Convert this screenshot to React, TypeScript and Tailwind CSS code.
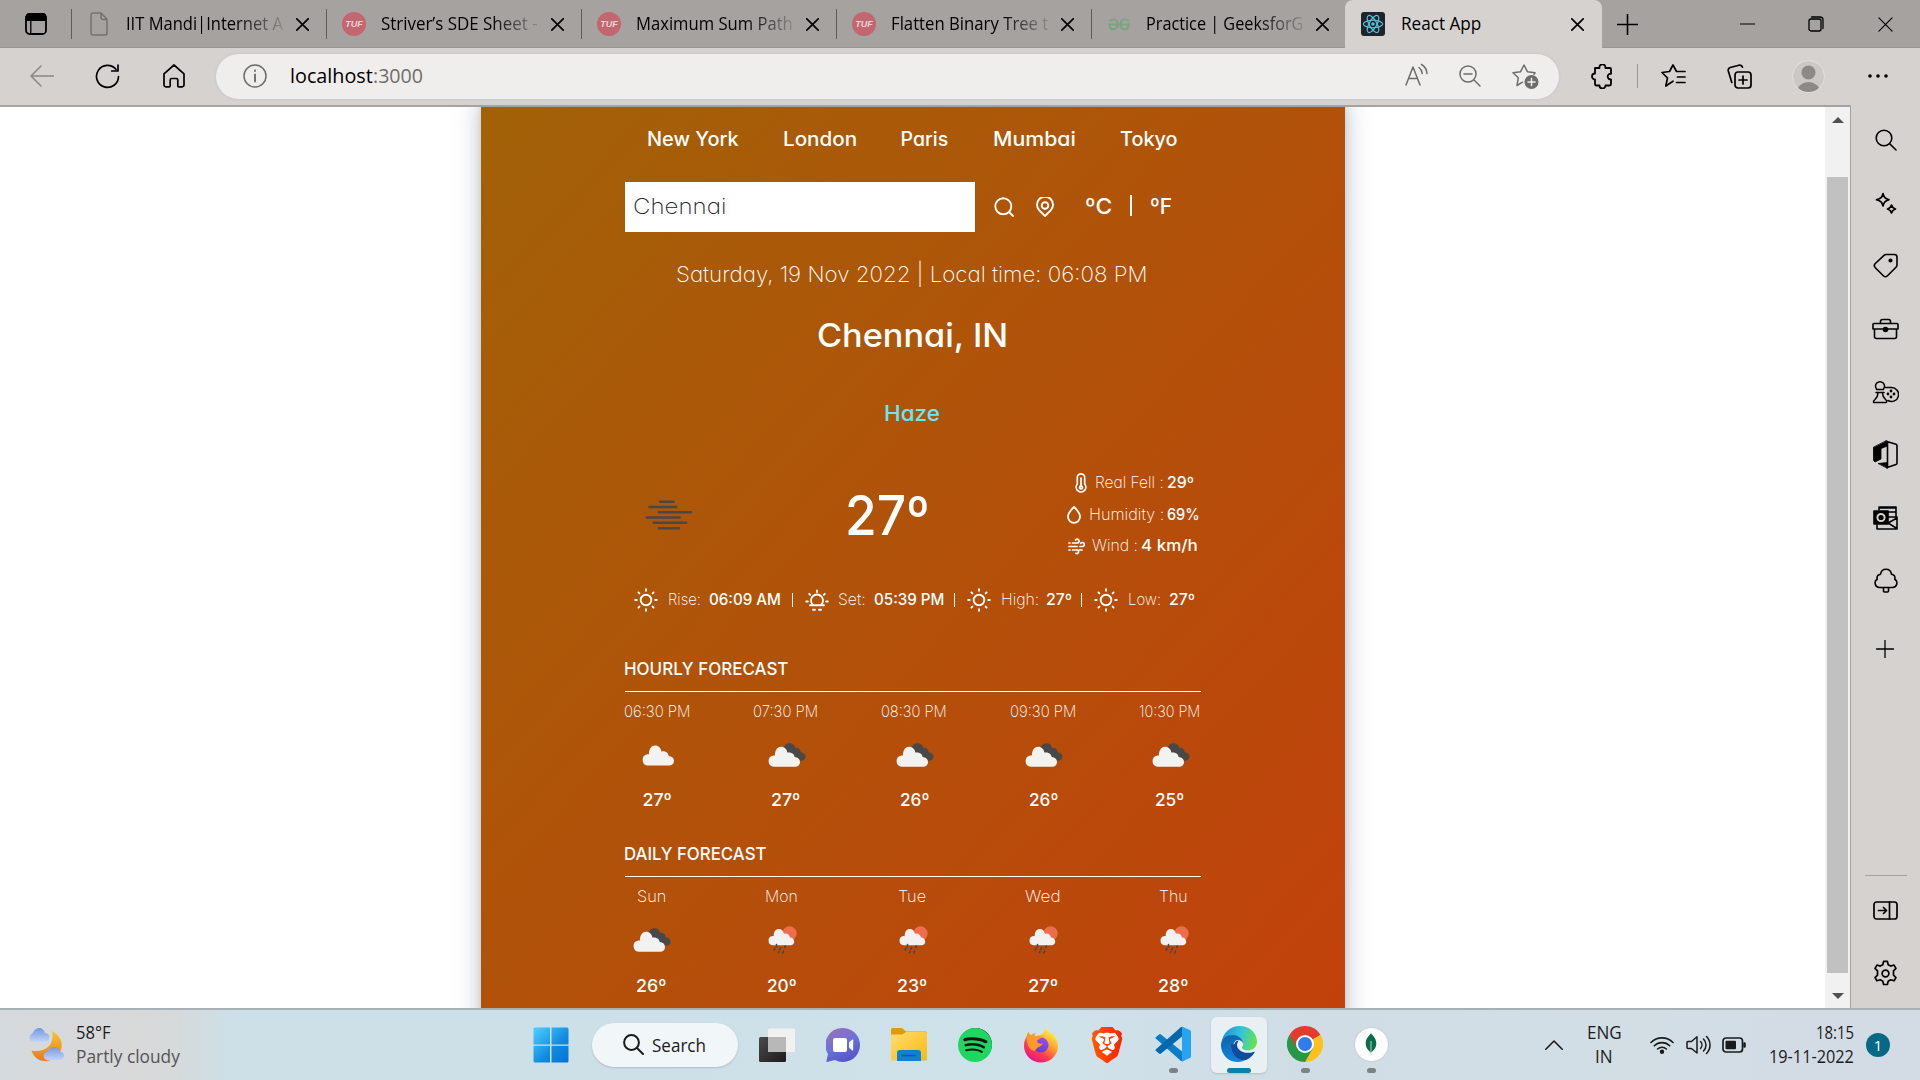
import React, { useLayoutEffect, useRef, useState } from "react";
import { SiBrave, SiSpotify } from "react-icons/si";

/* Text that is stretched horizontally so that it fills exactly `w` pixels. */
function Fit({ w, className = "", children }: { w: number; className?: string; children: React.ReactNode }) {
  const ref = useRef<HTMLSpanElement>(null);
  const [scale, setScale] = useState(1);
  useLayoutEffect(() => {
    if (ref.current) setScale(w / ref.current.offsetWidth);
  }, [w]);
  return (
    <span className={`block shrink-0 whitespace-pre ${className}`} style={{ width: w }}>
      <span ref={ref} className="inline-block origin-left" style={{ transform: `translateX(-1px) scaleX(${scale})` }}>
        {children}
      </span>
    </span>
  );
}

type IconProps = { w: number; h?: number; vb?: string; className?: string; sw?: number; children: React.ReactNode };
function Icon({ w, h = w, vb = "0 0 24 24", className = "", sw = 1.4, children }: IconProps) {
  return (
    <svg
      width={w}
      height={h}
      viewBox={vb}
      className={`block shrink-0 ${className}`}
      fill="none"
      stroke="currentColor"
      strokeWidth={sw}
      strokeLinecap="round"
      strokeLinejoin="round"
    >
      {children}
    </svg>
  );
}

const Cross = ({ size = 13, sw = 1.7 }: { size?: number; sw?: number }) => (
  <Icon w={size} vb="0 0 13 13" sw={sw}>
    <path d="M.8.8l11.4 11.4M12.2.8L.8 12.2" />
  </Icon>
);

/* ---------- Tab strip ---------- */

const TufIcon = () => (
  <span className="flex h-6 w-6 items-center justify-center rounded-full bg-[#c4666f] font-['Liberation_Sans'] text-[9px] font-bold italic text-[#ecd3d5]">
    TUF
  </span>
);
const DocIcon = () => (
  <Icon w={18} h={24} vb="0 0 18 24" className="text-[#75716f]" sw={1.5}>
    <path d="M3 1h8l6 6.3V21a2 2 0 0 1-2 2H3a2 2 0 0 1-2-2V3a2 2 0 0 1 2-2zM11 1v4.5a2 2 0 0 0 2 2h4" />
  </Icon>
);
const GfgIcon = () => (
  <Icon w={22} h={13} vb="0 0 22 13" className="text-[#7ba37f]" sw={1.9}>
    <path d="M1 6.5h20M2 2.6C5 0 9.600 1.600 9.600 6.200c0 6-7 6.800-8 2M20 2.600C17 0 12.400 1.600 12.400 6.200c0 6 7 6.800 8 2" />
  </Icon>
);

const tabs = [
  { title: "IIT Mandi|Internet A", icon: <DocIcon />, box: "w-[18px] ml-[18px] mr-[18px]" },
  { title: "Striver’s SDE Sheet -", icon: <TufIcon />, box: "w-6 ml-[15px] mr-[15px]" },
  { title: "Maximum Sum Path", icon: <TufIcon />, box: "w-6 ml-[15px] mr-[15px]" },
  { title: "Flatten Binary Tree t", icon: <TufIcon />, box: "w-6 ml-[15px] mr-[15px]" },
  { title: "Practice | GeeksforG", icon: <GfgIcon />, box: "w-[22px] ml-4 mr-4" },
];

function TabStrip() {
  return (
    <div className="flex h-12 items-center bg-[#a6a2a0] text-[18px] leading-6 shadow-[inset_0_-2px_1px_-1px_#9a9694]">
      <Icon w={22} h={22} vb="0 0 22 22" className="ml-[25px] mr-6" sw={1.8}>
        <rect x="1" y="1" width="20" height="20" rx="3.500" />
        <path d="M1.500 7V4a3 3 0 0 1 3-3h13a3 3 0 0 1 3 3v3z" fill="currentColor" />
        <path d="M5.800 8v13" strokeWidth="1.300" />
      </Icon>
      {tabs.map((t, i) => (
        <div key={i} className="flex w-[255px] items-center">
          <span className="h-[30px] w-px bg-[#5f5c5a]" />
          <span className={`shrink-0 ${t.box}`}>{t.icon}</span>
          <Fit w={157} className="-mt-0.5 overflow-hidden pl-px [mask-image:linear-gradient(to_right,#000_70%,#0002)]">
            {t.title}
          </Fit>
          <span className="ml-[13px]">
            <Cross />
          </span>
        </div>
      ))}
      <div className="-ml-px flex h-12 w-[257px] items-center rounded-t-lg bg-[#d6d2d0]">
        <span className="ml-4 flex h-6 w-6 items-center justify-center rounded-[3px] bg-[#20232a] text-[#53c1de]">
          <Icon w={22} sw={1.300}>
            <circle cx="12" cy="12" r="1.900" fill="currentColor" stroke="none" />
            <ellipse cx="12" cy="12" rx="10.500" ry="4.100" />
            <ellipse cx="12" cy="12" rx="10.500" ry="4.100" transform="rotate(60 12 12)" />
            <ellipse cx="12" cy="12" rx="10.500" ry="4.100" transform="rotate(120 12 12)" />
          </Icon>
        </span>
        <Fit w={80} className="-mt-0.5 ml-[17px] mr-[89px]">React App</Fit>
        <Cross />
      </div>
      <Icon w={21} vb="0 0 21 21" className="ml-[15px]" sw={1.600}>
        <path d="M10.500 .5v20M.5 10.500h20" />
      </Icon>
      <Icon w={15} h={14} vb="0 0 15 14" className="ml-[102px]" sw={1.200}>
        <path d="M.5 7h14" />
      </Icon>
      <Icon w={16} h={16} vb="0 0 16 16" className="ml-[53px]" sw={1.300}>
        <rect x="1" y="3" width="12" height="12" rx="2" />
        <path d="M3.500 1h8.500a3 3 0 0 1 3 3v8.500" />
      </Icon>
      <span className="ml-[54px]">
        <Cross size={15} sw={1} />
      </span>
    </div>
  );
}

/* ---------- Toolbar ---------- */

function Toolbar() {
  return (
    <div className="flex h-[57px] items-center bg-[#d6d2d0] pb-px">
      <Icon w={24} h={22} vb="0 0 24 22" className="ml-[30px] text-[#8a8785]" sw={1.500}>
        <path d="M23.500 11H1M11 1L1 11l10 10" />
      </Icon>
      <Icon w={25} h={25} vb="0 0 25 25" className="ml-[41px]" sw={1.700}>
        <path d="M23.500 12.500a11 11 0 1 1-2.600-7.200M23 1v6h-6.300" />
      </Icon>
      <Icon w={22} h={24} vb="0 0 22 24" className="ml-[43px]" sw={1.700}>
        <path d="M1 9.800L11 1l10 8.800V21a1.800 1.800 0 0 1-1.800 1.800h-3.400a1 1 0 0 1-1-1V16a1.500 1.500 0 0 0-1.500-1.500H8.700A1.500 1.500 0 0 0 7.200 16v5.800a1 1 0 0 1-1 1H2.800A1.800 1.800 0 0 1 1 21z" />
      </Icon>
      <div className="ml-[31px] flex h-[45px] w-[1343px] items-center rounded-full bg-[#efeeec] shadow-[0_0_3px_#c2bebc] text-[#6f6d6b]">
        <Icon w={24} className="ml-[27px]" sw={1.500}>
          <circle cx="12" cy="12" r="11" />
          <path d="M12 10.500v7M12 6.500v.600" strokeWidth="1.900" />
        </Icon>
        <div className="ml-6 flex text-[20px] leading-7">
          <Fit w={83} className="text-black">localhost</Fit>
          <Fit w={50}>:3000</Fit>
        </div>
        <Icon w={23} h={24} vb="0 0 23 24" className="-mt-0.5 ml-auto" sw={1.500}>
          <path d="M1 22L8 4l7 18M3.500 15.500h9M14 4.500c2 1.500 3 3.500 3.200 6M16.500 1.500c3.400 2 5.200 5 5.500 9" />
        </Icon>
        <Icon w={22} vb="0 0 22 22" className="ml-[31px]" sw={1.500}>
          <circle cx="9" cy="9" r="8" />
          <path d="M14.800 14.800l6.200 6.200M5 9h8" />
        </Icon>
        <Icon w={27} h={26} vb="0 0 27 26" className="ml-[31px] mr-5 mt-0.5" sw={1.500}>
          <path d="M10.500 18.200L5 21.500l1.300-7.800L1 8.800l7.600-1.100L12 1l3.400 6.700 7.600 1.100-1 1.500" />
          <circle cx="19.500" cy="18" r="7" fill="currentColor" stroke="none" />
          <path d="M19.500 14.500v7M16 18h7" stroke="#efeeec" />
        </Icon>
      </div>
      <Icon w={22} h={25} vb="0 0 22 25" className="ml-[31px]" sw={1.800}>
        <path d="M5 4h4.500a3 3 0 1 1 5.800 0H20a1 1 0 0 1 1 1v4.800a2.800 2.800 0 1 0 0 5.500V20a1.500 1.500 0 0 1-1.500 1.500h-4a3 3 0 0 1-6 0H6.500A1.500 1.500 0 0 1 5 20v-4.500a3 3 0 1 1 0-6z" />
      </Icon>
      <span className="ml-[25px] h-6 w-px bg-[#9c9896]" />
      <Icon w={25} h={24} vb="0 0 25 24" className="ml-[23px]" sw={1.700}>
        <path d="M12 17.200L4.800 22 6.500 14 1 8.500l7.500-1L12 1l3.500 6.500H24M16.500 13H24M15.500 18.500H24" />
      </Icon>
      <Icon w={25} h={25} vb="0 0 25 25" className="ml-[41px]" sw={1.700}>
        <rect x="8" y="8" width="16" height="16" rx="3" />
        <path d="M16 12v8M12 16h8M4.800 18.500L1.300 7A3 3 0 0 1 3.200 3.500L12 1.200a3 3 0 0 1 3.500 2" />
      </Icon>
      <span className="ml-10 flex h-[33px] w-[33px] shrink-0 items-center justify-center overflow-hidden rounded-full border border-[#e4e2e0] bg-[#cbc8c5]">
        <svg width="31" height="31" viewBox="0 0 31 31" fill="#8d8986">
          <circle cx="15.500" cy="11.500" r="7" />
          <path d="M4 31a11.500 10 0 0 1 23 0z" />
        </svg>
      </span>
      <Icon w={20} h={4} vb="0 0 20 4" className="ml-[43px]">
        <g fill="currentColor" stroke="none">
          <circle cx="2" cy="2" r="1.800" />
          <circle cx="10" cy="2" r="1.800" />
          <circle cx="18" cy="2" r="1.800" />
        </g>
      </Icon>
    </div>
  );
}

/* ---------- Weather app ---------- */

const Sun = () => (
  <Icon w={24} sw={1.900}>
    <circle cx="12" cy="12" r="5.300" />
    <path d="M12 1.200v1.600M12 21.200v1.600M1.200 12h1.600M21.200 12h1.600M4.400 4.400l1 1M18.600 18.600l1 1M4.400 19.600l1-1M18.600 5.400l1-1" />
  </Icon>
);
const Sunset = () => (
  <Icon w={24} sw={1.900}>
    <path d="M5 17.300h14M8 17a6 6 0 1 1 8 0M8 21.800h2M14 21.800h2M12 2.500v1.600M1.200 13.500h1.600M21.200 13.500h1.600M4.200 5.800l1 1M18.800 6.800l1-1" />
  </Icon>
);

const cloudPath = "M5.700 20.500a5.700 5.700 0 0 1-.300-11.300c.600 0 1.100 0 1.500.100C6.900 3.500 9.600.5 13.200.5c3.300 0 5.700 2.500 6.200 5.900 3.900-1 7.200 1.500 7.300 4.500 3.200.200 5.300 2 5.300 4.900 0 3-2 4.700-4.800 4.700z";
const Cloud = () => (
  <svg width="32" height="21" viewBox="0 0 32 21">
    <path d={cloudPath} fill="#f2f2f0" />
  </svg>
);
const Overcast = () => (
  <svg width="38" height="24" viewBox="0 0 38 24">
    <path d="M14.500 9C15 3.500 18 .3 21.500.3c3 0 5 1.700 5.600 4.400 3.500-.300 5.500 1.600 5.600 4.500 3 .300 4.800 2 4.800 4.300 0 2.600-2 4.200-4.500 4.200l-9-2z" fill="#484848" />
    <path d={cloudPath} transform="translate(0 3.200)" fill="#f2f2f0" />
  </svg>
);
const SunRain = () => (
  <svg width="29" height="28" viewBox="0 0 29 28">
    <circle cx="21.500" cy="7.500" r="7.200" fill="#ec6e4c" />
    <path d={cloudPath} transform="translate(0 2.500) scale(.82 .82)" fill="#f2f2f2" />
    <path d="M8.500 18.500v2M7 22l-.700 2M12.500 21.500l-.700 2M17.200 20l-.500 1.500M11 25.500l-.400 1M15.500 25l-.700 2" stroke="#484848" strokeWidth="1.600" strokeLinecap="round" fill="none" />
  </svg>
);

const cities: [string, number][] = [["New York", 92], ["London", 74], ["Paris", 48], ["Mumbai", 83], ["Tokyo", 58]];
const hourly: [string, number, React.ReactNode, string][] = [
  ["06:30 PM", 66, <Cloud />, "27º"],
  ["07:30 PM", 65, <Overcast />, "27º"],
  ["08:30 PM", 66, <Overcast />, "26º"],
  ["09:30 PM", 66, <Overcast />, "26º"],
  ["10:30 PM", 61, <Overcast />, "25º"],
];
const daily: [string, number, React.ReactNode, string][] = [
  ["Sun", 29, <Overcast />, "26º"],
  ["Mon", 33, <SunRain />, "20º"],
  ["Tue", 28, <SunRain />, "23º"],
  ["Wed", 36, <SunRain />, "27º"],
  ["Thu", 28, <SunRain />, "28º"],
];

function WeatherCard() {
  return (
    <div className="-mt-[34px] h-[949px] w-[864px] shrink-0 bg-[linear-gradient(to_bottom_right,#a16207,#c2410c)] px-36 pt-[34px] font-['Inter'] font-[450] text-white shadow-[0_22px_28px_-5px_#9ca3af,0_9px_11px_-6px_#9ca3af] [font-feature-settings:'cv11']">
      <nav className="flex h-16 items-center justify-center gap-[44px] pt-px text-[19.500px]">
        {cities.map(([c, w]) => <Fit key={c} w={w}>{c}</Fit>)}
      </nav>

      <div className="mt-[11px] flex h-[50px] items-center">
        <div className="flex h-[50px] w-[350px] items-center bg-white pl-[9px] text-[22px] font-extralight text-[#1f2530]">
          <Fit w={93} className="-mt-px">Chennai</Fit>
        </div>
        <Icon w={20} vb="0 0 20 20" className="ml-[19px]" sw={1.900}>
          <circle cx="9.300" cy="9.300" r="8" />
          <path d="M15.200 15.200L19 19" />
        </Icon>
        <Icon w={18} h={20} vb="0 0 18 20" className="ml-[22px] mr-8" sw={1.900}>
          <path d="M9 19L3.300 13.300a8 8 0 1 1 11.400 0z" />
          <circle cx="9" cy="8.500" r="3.300" />
        </Icon>
        <Fit w={27} className="-mt-px text-[22px]">ºC</Fit>
        <span className="ml-[17px] mr-[19px] -mt-1 h-[21px] w-[2px] bg-white" />
        <Fit w={22} className="-mt-px text-[22px]">ºF</Fit>
      </div>

      <div className="mt-7 flex h-7 items-center justify-center text-[22px] font-extralight">
        <Fit w={472}>Saturday, 19 Nov 2022 | Local time: 06:08 PM</Fit>
      </div>
      <div className="mt-7 flex h-10 items-center justify-center text-[33px]">
        <Fit w={191}>Chennai, IN</Fit>
      </div>
      <div className="mt-[43px] flex h-7 items-center justify-center text-[22px] text-[#67e8f9]">
        <Fit w={56}>Haze</Fit>
      </div>

      <div className="mt-10 flex h-[95px] items-center">
        <svg width="50" height="32" viewBox="0 0 50 32" className="ml-5 mt-px" stroke="#484848" strokeWidth="2.600" strokeLinecap="round">
          <path d="M15.700 2.200h14M4.600 7.700h28M14.500 13.200H48M2 18.700h34M9 24.200h34M14.500 29.700h21" />
        </svg>
        <Fit w={85} className="ml-[153px] mr-[136px] text-[54.500px] leading-[54px]">27º</Fit>
        <div className="flex flex-col text-[15.800px] font-extralight">
          <div className="flex h-[31.500px] items-center pl-2">
            <Icon w={12} h={20} vb="0 0 12 20" sw={1.700}>
              <path d="M2.300 11V4.500a3.700 3.700 0 0 1 7.400 0V11a4.800 4.800 0 1 1-7.400 0zM6 5v9" />
              <circle cx="6" cy="14.500" r="1.500" />
            </Icon>
            <Fit w={69} className="ml-[9px]">Real Fell :</Fit>
            <Fit w={27} className="ml-[3px] font-[450]">29º</Fit>
          </div>
          <div className="flex h-[31.500px] items-center">
            <Icon w={14} h={18} vb="0 0 14 18" sw={1.800}>
              <path d="M7 1c-3 2.800-6 6-6 9.800a6 6 0 0 0 12 0C13 7 10 3.800 7 1z" />
            </Icon>
            <Fit w={75} className="ml-[9px]">Humidity :</Fit>
            <Fit w={33} className="ml-[3px] font-[450]">69%</Fit>
          </div>
          <div className="flex h-[31.500px] items-center pl-px">
            <Icon w={17} h={17} vb="0 0 17 17" sw={1.700}>
              <path d="M1 5h1M4.500 5h4.800a1.900 1.900 0 1 0-1.700-3M1 8.500h8M12 8.500h2.200a2 2 0 1 0-1.500-3.200M1 12h1M4.500 12h3.800a1.800 1.800 0 1 1-.500 3.300M11 12h3" />
            </Icon>
            <Fit w={46} className="ml-[8px]">Wind :</Fit>
            <Fit w={57} className="ml-[3px] font-[450]">4 km/h</Fit>
          </div>
        </div>
      </div>

      <div className="mt-[26px] flex h-6 items-center pl-[9px] text-[15.800px] font-extralight">
        <Sun />
        <Fit w={33} className="ml-[11px] mr-2">Rise:</Fit>
        <Fit w={72} className="font-[450]">06:09 AM</Fit>
        <span className="ml-[10px] mr-3 h-[14px] w-px bg-white" />
        <Sunset />
        <Fit w={28} className="ml-[10px] mr-2">Set:</Fit>
        <Fit w={70} className="font-[450]">05:39 PM</Fit>
        <span className="ml-[9px] mr-3 h-[14px] w-px bg-white" />
        <Sun />
        <Fit w={38} className="ml-[11px] mr-[7px]">High:</Fit>
        <Fit w={26} className="font-[450]">27º</Fit>
        <span className="ml-[8px] mr-3 h-[14px] w-px bg-white" />
        <Sun />
        <Fit w={33} className="ml-[11px] mr-2">Low:</Fit>
        <Fit w={26} className="font-[450]">27º</Fit>
      </div>

      <div className="mt-[43px] flex h-7 items-center text-[17.800px]">
        <Fit w={164}>HOURLY FORECAST</Fit>
      </div>
      <hr className="mt-2 border-t border-white" />
      <div className="mt-[9px] flex justify-between">
        {hourly.map(([t, w, icon, deg]) => (
          <div key={t} className="flex flex-col items-center">
            <div className="flex h-[22px] items-center text-[15.800px] font-extralight"><Fit w={w}>{t}</Fit></div>
            <div className="mt-1 flex h-14 items-center justify-center">{icon}</div>
            <div className="mt-[5px] flex h-6 items-center text-[17.800px]"><Fit w={29}>{deg}</Fit></div>
          </div>
        ))}
      </div>

      <div className="mt-7 flex h-7 items-center text-[17.800px]">
        <Fit w={143}>DAILY FORECAST</Fit>
      </div>
      <hr className="mt-2 border-t border-white" />
      <div className="mt-[9px] flex justify-between">
        {daily.map(([t, w, icon, deg]) => (
          <div key={t} className="flex w-[54px] flex-col items-center">
            <div className="flex h-[22px] items-center text-[15.800px] font-extralight"><Fit w={w}>{t}</Fit></div>
            <div className="mt-1 flex h-14 items-center justify-center">{icon}</div>
            <div className="mt-[6px] flex h-6 items-center text-[17.800px]"><Fit w={30}>{deg}</Fit></div>
          </div>
        ))}
      </div>
    </div>
  );
}

function Scrollbar() {
  return (
    <div className="flex w-[25px] flex-col items-center bg-[#f1f1f1] pt-[10px]">
      <svg width="12" height="6" viewBox="0 0 12 6" fill="#505050"><path d="M0 6L6 0l6 6z" /></svg>
      <div className="mt-[54px] h-[796px] w-[21px] bg-[#c1c1c1]" />
      <svg width="12" height="6" viewBox="0 0 12 6" fill="#505050" className="mt-5"><path d="M0 0l6 6 6-6z" /></svg>
    </div>
  );
}

/* ---------- Edge sidebar ---------- */

const sideIcons = [
  <Icon w={22} vb="0 0 22 22" sw={1.600}><circle cx="9" cy="9" r="7.800" /><path d="M14.700 14.700L21 21" /></Icon>,
  <Icon w={22} vb="0 0 22 22" sw={1.700}>
    <path d="M8 1.500c1 4 2 5 6 6.300-4 1.200-5 2.200-6 6.200-1-4-2-5-6.500-6.200C6 6.500 7 5.500 8 1.500zM16.500 13c.600 2.300 1.500 3.200 4 4-2.500.700-3.400 1.500-4 4-.600-2.500-1.500-3.300-4-4 2.500-.800 3.400-1.700 4-4z" />
  </Icon>,
  <Icon w={25} h={25} vb="0 0 25 25" sw={1.600}>
    <path d="M13 1.500h8.500A2.500 2.500 0 0 1 24 4v8a3 3 0 0 1-1 2.200l-8.500 8.500a3 3 0 0 1-4.200 0l-8-8a3 3 0 0 1 0-4.200L11 2.400a3 3 0 0 1 2-.9z" />
    <circle cx="17.500" cy="7.500" r="1.300" fill="currentColor" />
  </Icon>,
  <Icon w={27} h={22} vb="0 0 27 22" sw={1.600}>
    <path d="M2 5.500h23a1 1 0 0 1 1 1V11H1V6.500a1 1 0 0 1 1-1zM2.500 11v7.500a2 2 0 0 0 2 2h18a2 2 0 0 0 2-2V11M8.500 5.500v-2a2 2 0 0 1 2-2h6a2 2 0 0 1 2 2v2" />
    <circle cx="13.500" cy="11.500" r="2" fill="currentColor" />
  </Icon>,
  <Icon w={27} h={24} vb="0 0 27 24" sw={1.500}>
    <path d="M5 9.500a4.500 4.500 0 1 1 6 0M4.500 9.500h7M4 12.500h8M6 13c0 3-1 4.500-3 6.500-1.500 1-2 3-1 3h12c1 0 1-2-.500-3-1.500-1.500-3-3.500-3-6.500M13 7.500h6a7 7 0 1 1-3 13" />
    <g fill="currentColor" stroke="none">
      <circle cx="19" cy="11" r="1.400" /><circle cx="19" cy="17" r="1.400" /><circle cx="16" cy="14" r="1.400" /><circle cx="22" cy="14" r="1.400" />
    </g>
  </Icon>,
  <Icon w={25} h={29} vb="0 0 25 29" sw={1.600}>
    <path d="M13 1.200l10 3a1.500 1.500 0 0 1 1 1.300v17.800a1.500 1.500 0 0 1-1 1.300l-9 3M14.500 1.500v26" />
    <path d="M13.500 1L14.500 6 8 8.500V19l-6 3-1.500-1.500V7.500zM5.500 23.500l9-1V28z" fill="currentColor" strokeWidth=".8" />
  </Icon>,
  <Icon w={25} h={24} vb="0 0 25 24" sw={1.600}>
    <rect x="1" y="5" width="14" height="13" fill="currentColor" />
    <circle cx="8" cy="11.500" r="3.600" stroke="#d6d2d0" strokeWidth="2" />
    <path d="M6 4V1h17v10M6 2h17M15 6h8M15 11h9v12H4v-4M24 12l-9 5 9 5.500" />
  </Icon>,
  <Icon w={24} h={25} vb="0 0 24 25" sw={1.600}>
    <path d="M5.500 19.500a4.500 4.500 0 0 1-2.300-8.300C2.500 8 4.500 6.500 6.500 6.200 7 3 9.500 1.200 12 1.200s5 1.800 5.500 5c2 .3 4 1.800 3.300 5a4.500 4.500 0 0 1-2.300 8.300zM9.500 19.500h5V23a1 1 0 0 1-1 1h-3a1 1 0 0 1-1-1z" />
  </Icon>,
];

function Sidebar() {
  return (
    <div className="flex w-[69px] flex-col items-center bg-[#d6d2d0] pt-[3px] text-black">
      {sideIcons.map((ic, i) => (
        <div key={i} className="flex h-[63px] w-[69px] items-center justify-center">{ic}</div>
      ))}
      <Icon w={18} vb="0 0 18 18" className="mt-7 mr-0.5" sw={1.300}><path d="M9 .5v17M.5 9h17" /></Icon>
      <div className="mt-[217px] h-px w-[42px] bg-[#a6a2a0]" />
      <Icon w={25} h={19} vb="0 0 25 19" className="mt-[25px]" sw={1.700}>
        <rect x="1" y="1" width="23" height="17" rx="2.500" />
        <path d="M16.500 1v17M5.500 9.500h8M10.500 6.500l3 3-3 3" />
      </Icon>
      <Icon w={27} className="mt-10" sw={1.500}>
        <circle cx="12" cy="12" r="3" />
        <path d="M10.300 1.200h3.400l.700 3 2.200 1.200 3-.900 1.700 2.900-2.200 2.200v3.800l2.200 2.200-1.700 2.900-3-.900-2.200 1.200-.700 3h-3.400l-.700-3-2.200-1.200-3 .900-1.700-2.900 2.200-2.200V9.600L2.700 7.400l1.700-2.900 3 .900 2.200-1.200z" />
      </Icon>
    </div>
  );
}

/* ---------- Taskbar ---------- */

const MoonClouds = () => (
  <svg width="37" height="35" viewBox="0 0 37 35" className="shrink-0">
    <defs>
      <linearGradient id="moon" x1="0" y1="0" x2="0" y2="1"><stop offset="0" stopColor="#f6c62c" /><stop offset="1" stopColor="#f0761c" /></linearGradient>
      <linearGradient id="cl" x1="0" y1="0" x2="0" y2="1"><stop offset="0" stopColor="#7598e2" /><stop offset="1" stopColor="#c0d4f8" /></linearGradient>
    </defs>
    <path d="M24 4c7 4 11 10 9.500 17C31.500 29 25 34 17 34c-7 0-12-5-13.500-10.500C10 25 17 23.500 21 19c4-4.500 4-10 3-15z" fill="url(#moon)" />
    <path d="M5 15a4.500 4.500 0 0 1-.500-8.500C6 2.500 9 1 11 1c3 0 5.500 2 6 5 3 .3 4.500 2 4.500 4.500S20 15 17 15z" fill="url(#cl)" />
    <path d="M20 33a4 4 0 0 1-.500-8C21 21 24 20 26 20c3 0 5 1.500 5.500 4.500 3 .3 4.500 1.800 4.500 4.200S34.500 33 32 33z" fill="url(#cl)" />
  </svg>
);

const Windows = () => (
  <svg width="36" height="36" viewBox="0 0 36 36">
    <defs><linearGradient id="win" x1="0" y1="0" x2="1" y2="1"><stop offset="0" stopColor="#4fd0ff" /><stop offset=".6" stopColor="#0f8ae0" /><stop offset="1" stopColor="#0674d2" /></linearGradient></defs>
    <path d="M2 .5h15v17H.5V2A1.500 1.500 0 0 1 2 .5zM18.500.5h15.500A1.500 1.500 0 0 1 35.500 2v15.500h-17zM.5 18.700H17v16.800H2A1.500 1.500 0 0 1 .5 34zM18.500 18.700h17V34a1.500 1.500 0 0 1-1.500 1.500H18.500z" fill="url(#win)" />
  </svg>
);
const TaskView = () => (
  <svg width="36" height="34" viewBox="0 0 36 34">
    <defs><linearGradient id="tv" x1="0" y1="0" x2="1" y2="1"><stop offset="0" stopColor="#4a4a4a" /><stop offset="1" stopColor="#1c1c1c" /></linearGradient></defs>
    <rect y="9" width="27" height="25" rx="1.500" fill="url(#tv)" />
    <rect x="9" y=".5" width="27" height="23.500" rx="1.500" fill="#f1f1f1" />
    <rect x="9" y="9" width="18" height="15" fill="#b8b8b8" />
  </svg>
);
const Chat = () => (
  <svg width="34" height="34" viewBox="0 0 34 34">
    <defs><linearGradient id="chat" x1=".2" y1="0" x2=".7" y2="1"><stop offset="0" stopColor="#9a72b4" /><stop offset=".5" stopColor="#6a72d8" /><stop offset="1" stopColor="#5552c4" /></linearGradient></defs>
    <path d="M17 0a17 17 0 1 1-8 32L1 34c-.600 0-.800-.500-.600-1L2 26A17 17 0 0 1 17 0z" fill="url(#chat)" />
    <rect x="7" y="10" width="14" height="14" rx="2" fill="#fff" />
    <path d="M23 14.500l3-2.800c.700-.500 1.200-.200 1.200.500v9.600c0 .700-.500 1-1.200.5l-3-2.800z" fill="#fff" />
  </svg>
);
const Folder = () => (
  <svg width="36" height="33" viewBox="0 0 36 33">
    <defs><linearGradient id="fo" x1="0" y1="0" x2="1" y2="1"><stop offset="0" stopColor="#ffdc72" /><stop offset="1" stopColor="#fbb90f" /></linearGradient></defs>
    <path d="M0 1.500A1.500 1.500 0 0 1 1.500 0H11l4 3.500h19.500A1.500 1.500 0 0 1 36 5v5H0z" fill="#dd9c0c" />
    <path d="M0 6.500h11.500L15 4h19.500A1.500 1.500 0 0 1 36 5.500V32.500H0z" fill="url(#fo)" />
    <path d="M6 33v-8a3 3 0 0 1 3-3h18a3 3 0 0 1 3 3v8z" fill="#1180d0" />
    <path d="M10.500 27.500h14.500" stroke="#0b5aa5" strokeWidth="1.500" />
  </svg>
);
const Spotify = () => (
  <span className="flex h-[33px] w-[33px] items-center justify-center rounded-full bg-[#141414]">
    <SiSpotify size={34} color="#1ed760" className="shrink-0" />
  </span>
);
const Firefox = () => (
  <svg width="36" height="36" viewBox="0 0 36 36">
    <defs>
      <linearGradient id="ff" x1=".8" y1=".1" x2=".25" y2=".95"><stop offset="0" stopColor="#fff04a" /><stop offset=".4" stopColor="#ff9a2c" /><stop offset=".7" stopColor="#ff3d4c" /><stop offset="1" stopColor="#e31587" /></linearGradient>
      <linearGradient id="fp" x1=".8" y1="0" x2=".2" y2="1"><stop offset="0" stopColor="#9a4dff" /><stop offset="1" stopColor="#5b3fc0" /></linearGradient>
    </defs>
    <path d="M23 .5c1.500 3 3 4.500 5 6 0-1 0-1 .300-1.500C32 9 35 13.500 35 19a17 16.500 0 0 1-34 0c0-5 1.500-8 3-10 0-1 .5-3 1.500-4 .5 1.500 1.500 2.500 2.500 3.200C9.500 7 11 6 13 5.500c-1 1-1 2.500-.800 3.500 4-.500 7-1 8.500-3.500.8-1.500 1.300-3 2.300-5z" fill="url(#ff)" />
    <circle cx="18" cy="18" r="7.600" fill="url(#fp)" />
    <path d="M3.500 9.500c3-2 5.500-1.500 8.500-.500 3 0 5 .500 6.500 1-1 2.500-4 2-4.500 4 .500 2.500 4 3.500 6 2-1.500 4-7 4-8 8-4 0-8-3-8.500-14.500z" fill="#ff9929" />
  </svg>
);
const Brave = () => (
  <span className="relative flex h-9 w-[34px] items-center justify-center">
    <span className="absolute h-[24px] w-[22px] rounded-b-[12px] bg-white" />
    <svg width="0" height="0" className="absolute"><defs><linearGradient id="brv" x1="0" y1="0" x2="1" y2="0"><stop offset="0" stopColor="#ff5a00" /><stop offset="1" stopColor="#ff2000" /></linearGradient></defs></svg>
    <SiBrave size={36} className="relative shrink-0" style={{ fill: "url(#brv)" }} />
  </span>
);
const VsCode = () => (
  <svg width="36" height="36" viewBox="0 0 36 36">
    <path d="M1 11l3-2.600a1.500 1.500 0 0 1 2 0L27 25.500v9.800c-.500 0-1-.2-1.500-.700L1 12.800c-.800-.6-.800-1.200 0-1.800z" fill="#0b7cc8" />
    <path d="M1 25l3 2.600a1.500 1.500 0 0 0 2 0L27 10.500V.7c-.500 0-1 .200-1.500.700L1 23.200c-.800.600-.800 1.200 0 1.800z" fill="#0468ae" />
    <path d="M27 .5l7.800 3.400A2 2 0 0 1 36 5.700v24.600a2 2 0 0 1-1.200 1.800L27 35.800z" fill="#26a4f0" />
  </svg>
);
const Edge = () => (
  <svg width="36" height="36" viewBox="0 0 36 36">
    <defs>
      <linearGradient id="e1" x1="0" y1=".3" x2="1" y2=".5"><stop offset="0" stopColor="#1b8fd2" /><stop offset=".5" stopColor="#35c1e0" /><stop offset="1" stopColor="#66e34b" /></linearGradient>
      <linearGradient id="e2" x1=".3" y1="0" x2=".5" y2="1"><stop offset="0" stopColor="#1063ac" /><stop offset="1" stopColor="#0e86de" /></linearGradient>
    </defs>
    <path d="M.5 16C2 7 9 0 18.500 0 29 0 36 7.500 36 15.500c0 5.500-4 9-9 9-4 0-6-1.500-6-2.700 0-1 1.200-1.300 1.200-4 0-4-4-8-10.200-8C6 9.800 2 12.500.5 16z" fill="url(#e1)" />
    <path d="M0 18C1 12 6 9 11.500 9c6.500 0 10.700 4.500 10.700 8.500-1-2-3-3.500-5-3.500-4 0-6 5-4 10.500 1.500 5 6 10 12 9-2.200 1.600-5 2.500-8 2.500C7 36-.5 28 0 18z" fill="url(#e2)" />
    <path d="M14 16.500c-3 6 1 13.500 7 14.500 5 .8 9-1 12.500-4.500.500-.500.200-1-.500-.800-9 3.500-17-1.500-17-6.700 0-2 1-3.500 2-4.500-1.700.200-3 .800-4 2z" fill="#0f4a9c" />
    <path d="M10 18c0 10 6 17 15 16 3.500-1.300 6.500-4 8.500-7.500-8 4.500-19 2-19.500-8z" fill="#104c9e" />
  </svg>
);
const Chrome = () => (
  <svg width="36" height="36" viewBox="0 0 36 36">
    <path d="M18 18L2.400 9A18 18 0 0 1 33.600 9z" fill="#e33b2e" />
    <path d="M18 18L33.600 9A18 18 0 0 1 18 36z" fill="#fcc21b" />
    <path d="M18 18V36A18 18 0 0 1 2.400 9z" fill="#279847" />
    <path d="M18 9h15.600H18L25.800 22.500 18 36l8-13.500z" fill="#fcc21b" />
    <path d="M10.200 22.500L2.400 9 14 15z" fill="#e33b2e" />
    <path d="M10.200 22.500L18 36l7.800-13.500z" fill="#279847" />
    <circle cx="18" cy="18" r="9" fill="#fff" />
    <circle cx="18" cy="18" r="7" fill="#2f7cee" />
  </svg>
);
const Mongo = () => (
  <span className="flex h-[33px] w-[33px] items-center justify-center rounded-full bg-[#fcfcfc] shadow-[0_0_2px_#b5bcc0]">
    <svg width="12" height="24" viewBox="0 0 12 24">
      <path d="M6 1c1 2.500 5.300 4.500 5.300 10.500 0 5-3.500 7.500-5.300 9-1.800-1.500-5.300-4-5.300-9C.7 5.500 5 3.500 6 1z" fill="#0b6b4a" />
      <path d="M6 9v14" stroke="#b6d6c8" strokeWidth="1" />
    </svg>
  </span>
);

const apps = [<TaskView />, <Chat />, <Folder />, <Spotify />, <Firefox />, <Brave />, <VsCode />, <Edge />, <Chrome />, <Mongo />];

function Taskbar() {
  return (
    <div className="flex h-[72px] items-center border-t-2 border-[#a7b0b4] bg-[linear-gradient(90deg,#d5dade_0%,#d8d9d9_7%,#d6dadb_9%,#cddfe7_12%,#cde0e8_30%,#cfe1e9_55%,#d0dde5_68%,#d2dee5_80%,#d3dbe4_100%)] pb-px text-[18px] leading-6 text-[#1b1b1b]">
      <div className="ml-7 flex w-[505px] items-center">
        <MoonClouds />
        <div className="-mt-0.5 ml-3">
          <Fit w={35}>58°F</Fit>
          <Fit w={104} className="text-[#555]">Partly cloudy</Fit>
        </div>
      </div>
      <Windows />
      <div className="ml-[23px] flex h-11 w-[146px] items-center rounded-full bg-[#f1f6f9] shadow-[0_1px_2px_#aebcc3]">
        <Icon w={21} vb="0 0 21 21" className="ml-[31px]" sw={2}>
          <circle cx="8.500" cy="8.500" r="7.400" />
          <path d="M14 14l6 6" />
        </Icon>
        <Fit w={54} className="ml-[9px]">Search</Fit>
      </div>
      <div className="ml-[6px] flex">
        {apps.map((a, i) => (
          <div
            key={i}
            className={`mx-[5px] flex h-14 w-14 flex-col items-center rounded-md ${i === 7 ? "bg-[#e9f0f4] shadow-[0_1px_2px_#b4c0c6]" : ""}`}
          >
            <span className="mt-[9px] flex h-[38px] items-center">{a}</span>
            {i === 7 && <span className="mt-[5px] h-[5px] w-6 rounded-full bg-[#0783a8]" />}
            {(i === 6 || i > 7) && <span className="mt-[5px] h-[5px] w-[9px] rounded-full bg-[#7c8387]" />}
          </div>
        ))}
      </div>
      <Icon w={18} h={10} vb="0 0 18 10" className="ml-auto" sw={1.600}><path d="M.8 9.200L9 1l8.200 8.200" /></Icon>
      <div className="-mt-0.5 ml-6 flex w-[36px] flex-col items-center">
        <Fit w={35}>ENG</Fit>
        <Fit w={18}>IN</Fit>
      </div>
      <Icon w={24} h={18} vb="0 0 24 18" className="ml-[27px]" sw={1.600}>
        <path d="M1 6.500a15.500 15.500 0 0 1 22 0M4.300 9.800a11 11 0 0 1 15.400 0M7.600 13a6.500 6.500 0 0 1 8.800 0" />
        <circle cx="12" cy="15.800" r="1.400" fill="currentColor" />
      </Icon>
      <Icon w={25} h={20} vb="0 0 25 20" className="ml-3" sw={1.500}>
        <path d="M1 7.500a1 1 0 0 1 1-1h3.500L11 1.800V18l-5.500-4.500H2a1 1 0 0 1-1-1zM14.500 6.500a5 5 0 0 1 0 7M17.500 4a8.500 8.500 0 0 1 0 12M20.500 1.500a12 12 0 0 1 0 17" />
      </Icon>
      <Icon w={24} h={16} vb="0 0 24 16" className="ml-[11px]" sw={1.700}>
        <rect x="1" y="1" width="19.500" height="14" rx="3" />
        <rect x="3.500" y="3.800" width="10.500" height="8.400" rx="1" fill="currentColor" stroke="none" />
        <path d="M22.500 6.500v3" strokeWidth="2.500" />
      </Icon>
      <div className="-mt-0.5 ml-6 flex w-[85px] flex-col items-end">
        <Fit w={38}>18:15</Fit>
        <Fit w={85}>19-11-2022</Fit>
      </div>
      <span className="ml-[11px] mr-[30px] flex h-6 w-6 shrink-0 items-center justify-center rounded-full bg-[#066a86] text-[15px] text-white">1</span>
    </div>
  );
}

export default function App() {
  return (
    <div className="flex h-[1080px] w-[1920px] flex-col overflow-hidden bg-white font-['Open_Sans',sans-serif] text-black">
      <TabStrip />
      <Toolbar />
      <div className="flex h-[903px]">
        <div className="flex w-[1851px] border-r border-t-2 border-[#a6a2a0]">
          <div className="flex w-[1825px] items-start justify-center overflow-hidden bg-white pl-px">
            <WeatherCard />
          </div>
          <Scrollbar />
        </div>
        <Sidebar />
      </div>
      <Taskbar />
    </div>
  );
}
